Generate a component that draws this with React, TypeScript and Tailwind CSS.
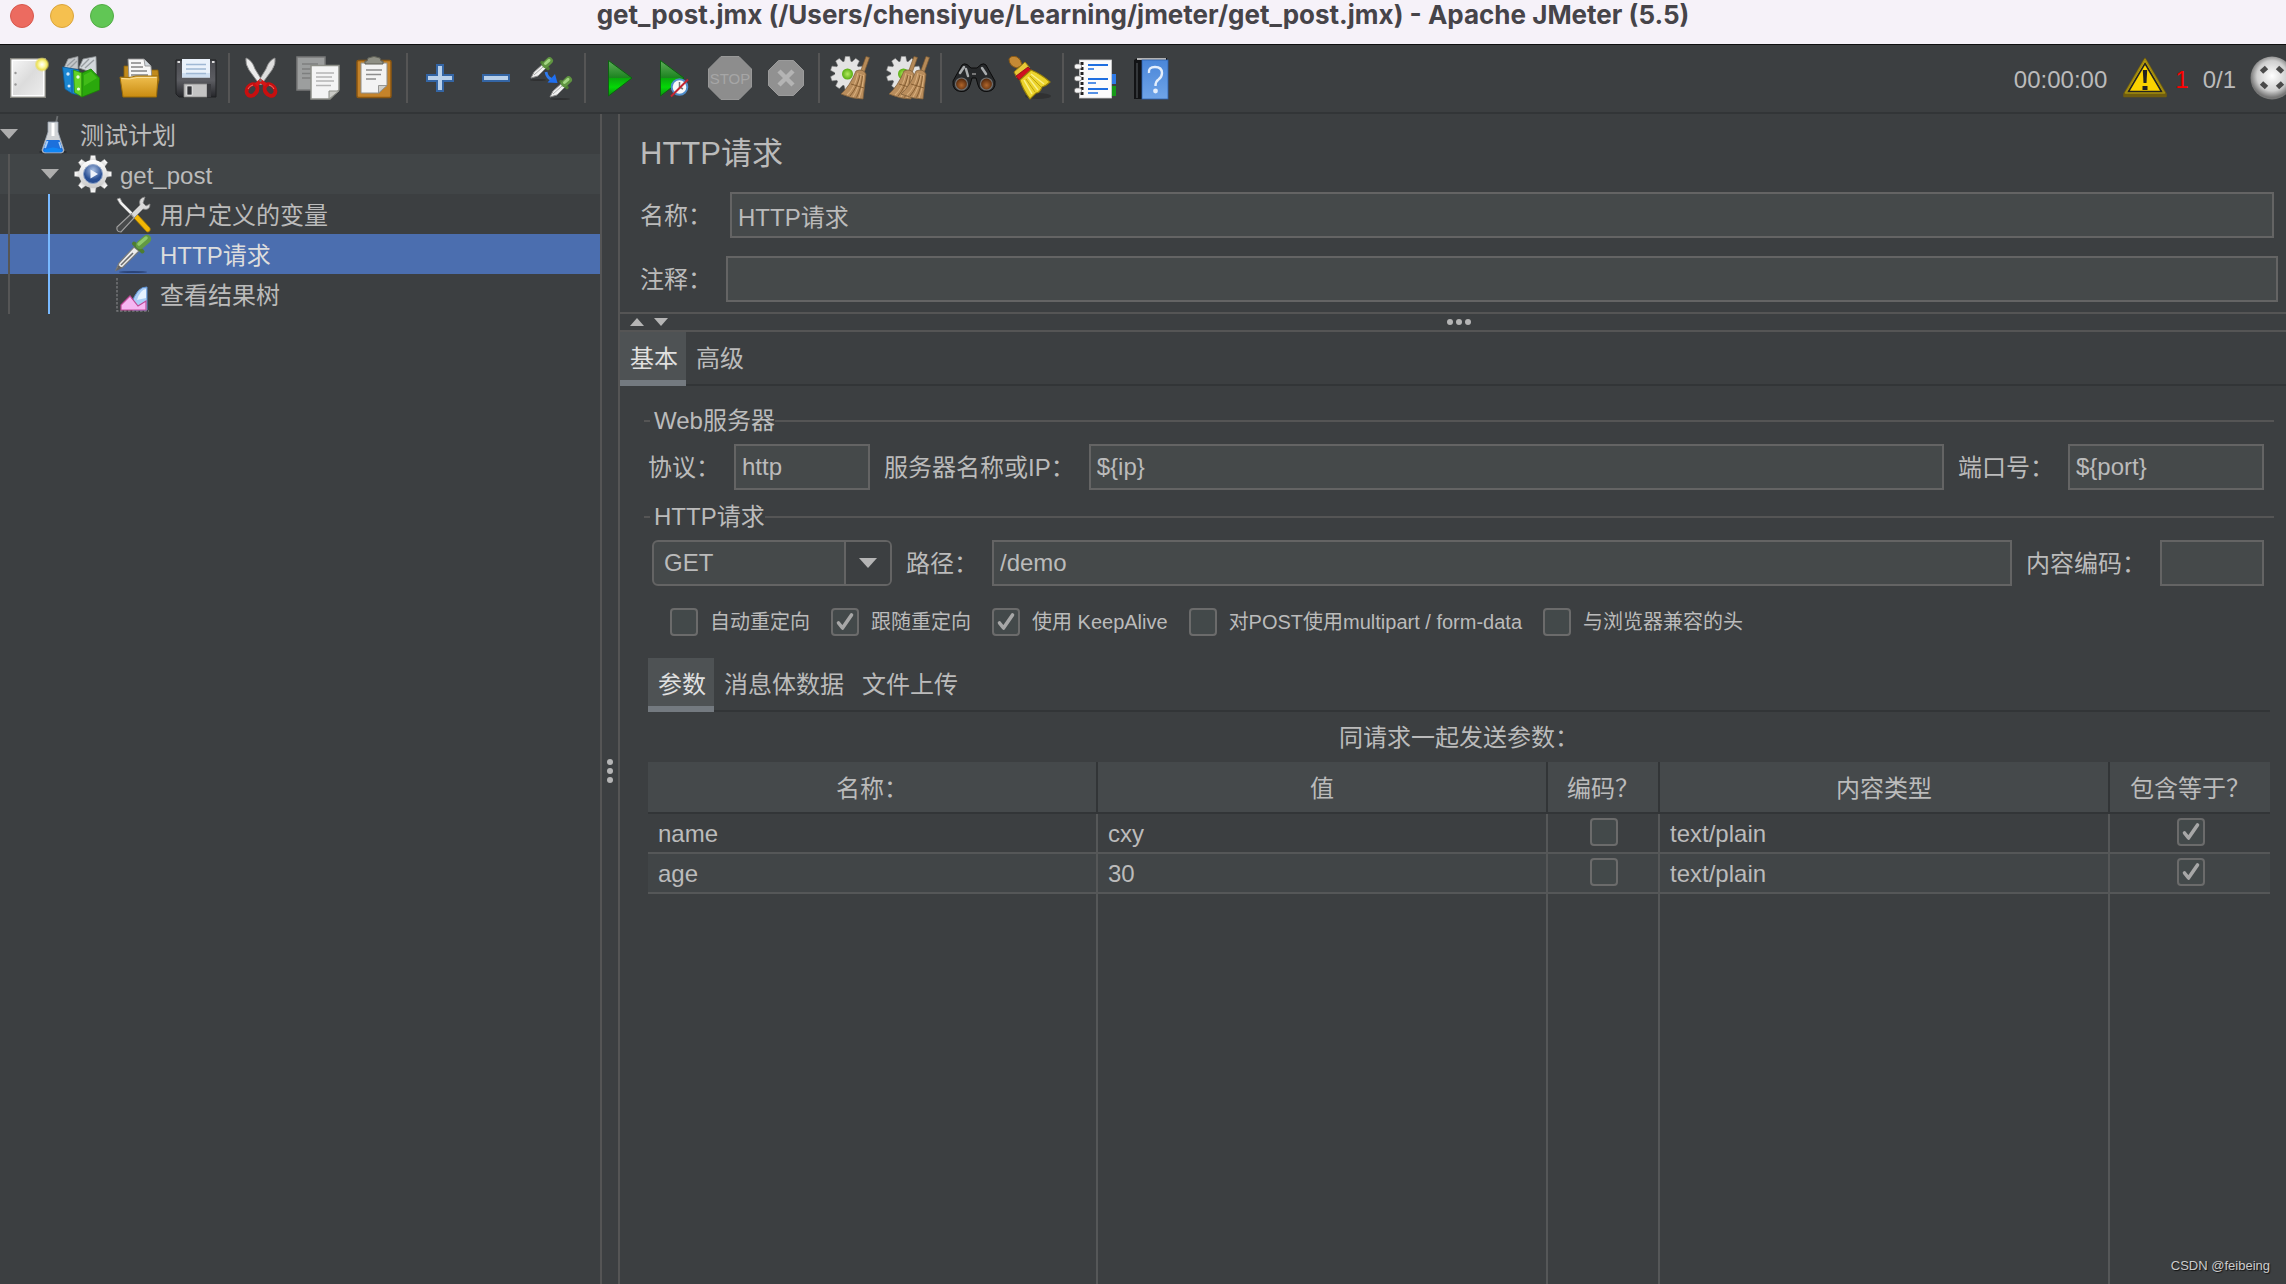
import React, { useState } from "react";

type IconProps = { children: React.ReactNode };

function Icon({ children }: IconProps) {
  return (
    <svg viewBox="0 0 44 44" className="block h-11 w-11 shrink-0" aria-hidden="true">
      {children}
    </svg>
  );
}

function Cog({ cx, cy, r, teeth = 8, fill }: { cx: number; cy: number; r: number; teeth?: number; fill: string }) {
  const list = Array.from({ length: teeth }, (_, i) => (360 / teeth) * i);
  return (
    <g fill={fill} stroke="#9a9a9a" strokeWidth="0.5">
      {list.map((a) => (
        <path
          key={a}
          d={`M${cx - 3.6} ${cy - r + 3} L${cx - 2.2} ${cy - r - 4.5} H${cx + 2.2} L${cx + 3.6} ${cy - r + 3} Z`}
          transform={`rotate(${a} ${cx} ${cy})`}
        />
      ))}
      <circle cx={cx} cy={cy} r={r} stroke="none" />
    </g>
  );
}

function Besom() {
  return (
    <g>
      <path d="M36 0.5 L39.5 1.5 L34 17 L30.5 15.5 Z" fill="#b58a58" stroke="#7d5a32" strokeWidth="0.7" />
      <path d="M26 15 Q33 12 36 18 L33 43 Q22 43 11 38 Q20 30 26 15 Z" fill="#b98d5c" stroke="#7f5f3b" strokeWidth="0.8" />
      <path d="M28 17 Q25 32 17 39 M31 18 Q29 32 23 41 M33.5 19 Q33 32 29 42" stroke="#d8ae7c" strokeWidth="1.1" fill="none" />
      <path d="M30 19 Q27 32 20 40 M32.5 20 Q31 33 26.500 41.500 M21 28 L34 32" stroke="#80592f" strokeWidth="0.9" fill="none" />
    </g>
  );
}

function Dropper() {
  return (
    <g>
      <path d="M1 20 L4 14 L13 6 L17 9 L8 18 Z" fill="#f1f1f1" stroke="#8b8b8b" strokeWidth="1" />
      <path d="M4 17 L13 9" stroke="#999" strokeWidth="0.8" />
      <path d="M12 4.500 L18 10.500" stroke="#4b7a30" strokeWidth="3.4" strokeLinecap="round" />
      <path d="M15.500 6.500 L19.500 2.800" stroke="#5f9440" strokeWidth="7" strokeLinecap="round" />
      <path d="M15.500 5.500 L19 2.300" stroke="#a3d582" strokeWidth="3" strokeLinecap="round" />
    </g>
  );
}

function Gradients() {
  return (
    <svg width="0" height="0" className="absolute" aria-hidden="true">
      <defs>
        <linearGradient id="play" x1="0" y1="0" x2="0" y2="1">
          <stop offset="0" stopColor="#5fae5a" />
          <stop offset="0.48" stopColor="#1d8420" />
          <stop offset="0.5" stopColor="#0aa80c" />
          <stop offset="0.75" stopColor="#04d806" />
          <stop offset="1" stopColor="#0c8d10" />
        </linearGradient>
        <linearGradient id="folder" x1="0" y1="0" x2="0" y2="1">
          <stop offset="0" stopColor="#f0c050" />
          <stop offset="1" stopColor="#c98b10" />
        </linearGradient>
        <linearGradient id="paper" x1="0" y1="0" x2="1" y2="1">
          <stop offset="0" stopColor="#f4f4f4" />
          <stop offset="0.5" stopColor="#dcdcdc" />
          <stop offset="1" stopColor="#ececec" />
        </linearGradient>
        <linearGradient id="metal" x1="0" y1="0" x2="0" y2="1">
          <stop offset="0" stopColor="#ffffff" />
          <stop offset="1" stopColor="#c9c9c9" />
        </linearGradient>
        <linearGradient id="floppy" x1="0" y1="0" x2="0" y2="1">
          <stop offset="0" stopColor="#4a4b50" />
          <stop offset="0.55" stopColor="#5c5d62" />
          <stop offset="1" stopColor="#25262a" />
        </linearGradient>
        <linearGradient id="book" x1="0" y1="0" x2="0" y2="1">
          <stop offset="0" stopColor="#4a86d8" />
          <stop offset="1" stopColor="#6fa4e8" />
        </linearGradient>
        <radialGradient id="sun">
          <stop offset="0" stopColor="#ffffff" />
          <stop offset="0.4" stopColor="#fbf7a8" />
          <stop offset="0.7" stopColor="#eee35a" />
          <stop offset="1" stopColor="#e8d840" stopOpacity="0" />
        </radialGradient>
        <radialGradient id="lime">
          <stop offset="0" stopColor="#b5ea60" />
          <stop offset="1" stopColor="#58ad12" />
        </radialGradient>
        <radialGradient id="lens" cx="0.5" cy="0.6">
          <stop offset="0" stopColor="#b0662c" />
          <stop offset="1" stopColor="#5a2c0e" />
        </radialGradient>
        <radialGradient id="ball" cx="0.5" cy="0.45">
          <stop offset="0" stopColor="#ffffff" />
          <stop offset="0.7" stopColor="#cfcfcf" />
          <stop offset="1" stopColor="#777777" />
        </radialGradient>
        <radialGradient id="blueball" cx="0.5" cy="0.3">
          <stop offset="0" stopColor="#a9bfe2" />
          <stop offset="1" stopColor="#294f93" />
        </radialGradient>
      </defs>
    </svg>
  );
}

const icons: Record<string, React.ReactNode> = {
  新建: (
    <>
      <rect x="4.700" y="2.700" width="34.600" height="38.600" fill="#fff" stroke="#85857f" strokeWidth="1.4" />
      <rect x="7" y="5" width="30" height="34" fill="url(#paper)" />
      <circle cx="9.500" cy="17" r="1.200" fill="#999" />
      <circle cx="9.500" cy="28.500" r="1.200" fill="#999" />
      <circle cx="36" cy="8.500" r="7.500" fill="url(#sun)" />
    </>
  ),
  模板: (
    <>
      <path d="M2 12 L6 3 L16 0.500 L16 13 Z" fill="#c4c7ca" stroke="#8b8f92" strokeWidth="0.8" />
      <path d="M17 12 L21 3 L34 0.500 L34.500 18 Z" fill="#d3d8dc" stroke="#8b8f92" strokeWidth="0.8" />
      <path d="M5 10 L13 3 M19 11 L27 3 M23 12 L32 4 M8 12 L15 5" stroke="#999ea2" strokeWidth="1.400" />
      <path d="M0.500 11 L4 11.500 L17 14 V39 L10 37.500 L3 33 Z" fill="#1a86d2" stroke="#0c5b98" strokeWidth="0.8" />
      <path d="M10 14 V37" stroke="#0d5fa0" strokeWidth="1" />
      <circle cx="6" cy="18" r="1.700" fill="#cfe8fa" />
      <circle cx="7" cy="30" r="1.500" fill="#cfe8fa" />
      <path d="M11.500 14 L20 17 V41 L12.500 36.500 Z" fill="#63d426" stroke="#2f8f0a" strokeWidth="0.8" />
      <path d="M20 17 L29 13 L37.500 22 V34 L20 41 Z" fill="#2aa80c" stroke="#1d7d08" strokeWidth="0.8" />
      <path d="M22 19 L29 15.500 L35 22 L22 30 Z" fill="#4cc41e" opacity="0.7" />
      <circle cx="16" cy="21" r="1.700" fill="#e6fadc" />
      <circle cx="16.500" cy="33" r="1.600" fill="#e6fadc" />
    </>
  ),
  打开: (
    <>
      <path d="M6 10 H13 V14 H40 L41 24 L38 36 H6 Z" fill="#c08a1c" stroke="#8a6008" strokeWidth="0.8" />
      <path d="M10 3 H26 L33 10 L34 24 H11 Z" fill="#f7f7f7" stroke="#8c8c8c" strokeWidth="0.9" />
      <path d="M26 3 L27 10 L33 10" fill="#cfd6dc" stroke="#8c8c8c" strokeWidth="0.8" />
      <path d="M13 7 H23 M13 11 H25 M13 15 H29 M13 19 H30" stroke="#858585" strokeWidth="1.500" />
      <path d="M2 21 Q12 22.500 18 20 H40 L38.500 41 H5 Z" fill="url(#folder)" stroke="#9c6c08" strokeWidth="1" />
      <path d="M3.500 22.500 Q12 24 19 21.500 H38.500" stroke="#fbe09a" strokeWidth="1" fill="none" />
    </>
  ),
  保存: (
    <>
      <path d="M2 4 H42 V41 H5 L2 38 Z" fill="url(#floppy)" stroke="#1f2023" strokeWidth="1" />
      <rect x="3.500" y="5" width="2.500" height="2" fill="#ddd" />
      <rect x="38" y="5" width="2.500" height="2" fill="#ddd" />
      <rect x="8" y="3" width="28" height="18.500" fill="#eaf2fb" />
      <rect x="8" y="17" width="28" height="4.500" fill="#cfdff1" />
      <path d="M12 8.500 H32 M12 13 H32 M12 17.500 H32" stroke="#9fb8d4" strokeWidth="1.600" />
      <path d="M10 28 H33 V41 H10 Z" fill="#c4c4c4" stroke="#888" strokeWidth="0.8" />
      <rect x="13" y="30" width="5" height="9" fill="#333438" stroke="#fff" strokeWidth="0.6" />
      <path d="M33 28 H37 V41 H33 Z" fill="#3a3b3f" />
    </>
  ),
  剪切: (
    <>
      <path d="M6 2 Q12 4 15 13 L23 26 L20 29 L9 14 Q5 8 6 2 Z" fill="#ececec" stroke="#8e8e8e" strokeWidth="0.9" />
      <path d="M35 2 Q29 4 26 13 L18 26 L21 29 L32 14 Q36 8 35 2 Z" fill="#dedede" stroke="#8e8e8e" strokeWidth="0.9" />
      <ellipse cx="12" cy="34" rx="4.800" ry="6.200" transform="rotate(38 12 34)" fill="none" stroke="#c80f0f" strokeWidth="4" />
      <ellipse cx="30" cy="34" rx="4.800" ry="6.200" transform="rotate(-38 30 34)" fill="none" stroke="#c80f0f" strokeWidth="4" />
      <path d="M16 29 L20.500 25 L26 29" stroke="#d41616" strokeWidth="4" fill="none" />
      <path d="M8 33 Q9 30 13 29 M34 33 Q33 30 29 29" stroke="#f26a6a" strokeWidth="1" fill="none" />
      <circle cx="20.500" cy="24.500" r="1.200" fill="#777" />
    </>
  ),
  复制: (
    <>
      <rect x="1" y="1" width="28" height="33" fill="#9c9e9e" stroke="#787a7a" strokeWidth="1.500" />
      <path d="M6 8 H22 M6 13 H22 M6 17.500 H18 M6 22 H20" stroke="#7d7f7f" strokeWidth="1.500" />
      <path d="M15 9.500 H43 V34 L34 43 H15 Z" fill="#f4f4f4" stroke="#8d8f88" strokeWidth="1.500" />
      <path d="M33 43 V35 H43 Z" fill="#c9cac6" stroke="#8d8f88" strokeWidth="1" />
      <path d="M20 17 H38 M20 21 H36 M20 25 H38 M20 29.500 H35" stroke="#b4b4b4" strokeWidth="1.500" />
    </>
  ),
  粘贴: (
    <>
      <rect x="5" y="4.500" width="34" height="37" rx="1.500" fill="#c4832a" stroke="#8c5710" strokeWidth="1.500" />
      <path d="M9 7 H35 V29 L27 37 H9 Z" fill="#f3f3f3" stroke="#8f8f8b" strokeWidth="1" />
      <path d="M26.500 37 V29.500 H35 Z" fill="#cfcfcb" stroke="#8f8f8b" strokeWidth="0.9" />
      <path d="M16 2 Q22 -1 28 2 L29 5 H31 V8 H13 V5 H15 Z" fill="#8f9085" stroke="#5e5f55" strokeWidth="1" />
      <path d="M14 14 H30 M14 18.500 H29 M14 23 H24" stroke="#8d8d8d" strokeWidth="1.600" />
    </>
  ),
  展开: <path d="M19 9 H25 V19 H35 V25 H25 V35 H19 V25 H9 V19 H19 Z" fill="#b9d0ea" stroke="#3465a4" strokeWidth="2" />,
  折叠: <rect x="9" y="19" width="26" height="6" fill="#b9d0ea" stroke="#3465a4" strokeWidth="2" />,
  切换: (
    <>
      <ellipse cx="8" cy="24" rx="8" ry="1" fill="#222" opacity="0.5" />
      <ellipse cx="30" cy="43" rx="10" ry="1" fill="#222" opacity="0.5" />
      <g transform="translate(0 2)">
        <Dropper />
      </g>
      <g transform="translate(19 21)">
        <Dropper />
      </g>
      <path d="M16 16 Q17 22 22 23.500" stroke="#2f7bf0" strokeWidth="2.800" fill="none" />
      <path d="M25 18 L27.500 27 L17.500 26.500 Z" fill="#1f6ff0" />
    </>
  ),
  启动: <path d="M12.500 4.500 L36 22 L12.500 40 Z" fill="url(#play)" stroke="#0c6510" strokeWidth="1" />,
  不停顿启动: (
    <>
      <path d="M8.500 4.500 L32 22 L8.500 40 Z" fill="url(#play)" stroke="#0c6510" strokeWidth="1" />
      <circle cx="27.500" cy="31" r="7.800" fill="#f8f8f8" stroke="#4f8cc9" strokeWidth="2" />
      <path d="M27.500 26 V31 L31 33" stroke="#777" strokeWidth="1.500" fill="none" />
      <path d="M19 40.500 L36 23.500" stroke="#c22632" strokeWidth="2" />
    </>
  ),
  停止: (
    <>
      <path d="M13 0.500 H31 L43.500 13 V31 L31 43.500 H13 L0.500 31 V13 Z" fill="#8d8d8d" stroke="#989898" strokeWidth="1" />
      <text x="22" y="28" textAnchor="middle" fontFamily="Liberation Sans" fontSize="15" fill="#a6a6a6">
        STOP
      </text>
    </>
  ),
  关闭: (
    <>
      <path d="M14.500 4.500 H29.500 L39.500 14.500 V29.500 L29.500 39.500 H14.500 L4.500 29.500 V14.500 Z" fill="#919191" stroke="#9b9b9b" strokeWidth="1" />
      <path d="M15 15 L29 29 M29 15 L15 29" stroke="#b4b4b4" strokeWidth="4.500" />
    </>
  ),
  清除: (
    <>
      <Cog cx={17.500} cy={17.500} r={12.500} teeth={10} fill="#e3e3e3" />
      <circle cx="17.500" cy="18" r="5.500" fill="url(#lime)" />
      <Besom />
    </>
  ),
  清除全部: (
    <>
      <Cog cx={17.500} cy={17.500} r={12.500} teeth={10} fill="#e3e3e3" />
      <circle cx="17.500" cy="18" r="5.500" fill="url(#lime)" />
      <g transform="translate(-8 0)">
        <Besom />
      </g>
      <g transform="translate(4 0)">
        <Besom />
      </g>
    </>
  ),
  搜索: (
    <>
      <path d="M10 9 Q12 7 15 8.500 L19 12 H25 L29 8.500 Q32 7 34 9 L43 25 Q44 35 35 35.500 Q28 36 26 29 L24 22 H20 L18 29 Q16 36 9 35.500 Q0 35 1 25 Z" fill="#26282a" stroke="#0b0b0b" strokeWidth="1" />
      <path d="M8 17 L12 11 M30 12 L34 18 M14 13 L16 20" stroke="#a9acae" strokeWidth="2.500" strokeLinecap="round" />
      <circle cx="9.500" cy="28" r="6" fill="url(#lens)" stroke="#6f6f6f" strokeWidth="1.200" />
      <circle cx="34.500" cy="28" r="6" fill="url(#lens)" stroke="#6f6f6f" strokeWidth="1.200" />
      <path d="M20 18 H24" stroke="#777" strokeWidth="2" />
    </>
  ),
  重置搜索: (
    <>
      <ellipse cx="30" cy="40" rx="13" ry="3" fill="#222" opacity="0.45" />
      <path d="M1 3 Q3 -1 9 1 Q13 3 14 9 L9 12 Q1 10 1 3 Z" fill="#c58a35" stroke="#8a5a15" strokeWidth="1" />
      <path d="M6 16 L17 6 L22 12 L9 22 Z" fill="#e8c838" stroke="#9a7c10" strokeWidth="1" />
      <path d="M8 20 L20 11 L23 14 L11 24 Z" fill="#cf1020" stroke="#8b0814" strokeWidth="0.8" />
      <path d="M12 24 L23 14 Q33 18 42 26 Q38 30 34 31 Q32 37 28 37 L22 43 Q15 34 12 24 Z" fill="#ecd42c" stroke="#9c8408" strokeWidth="1.100" />
      <path d="M16 24 L24 38 M20 21 L30 34 M23 18 L36 28" stroke="#fbf08a" strokeWidth="1.500" />
      <path d="M18 23 L27 36 M22 20 L33 31" stroke="#b79c10" strokeWidth="0.900" />
    </>
  ),
  函数助手: (
    <>
      <rect x="36" y="18" width="6" height="10" fill="#2f7be8" />
      <rect x="36" y="30" width="6" height="10" fill="#159a18" />
      <rect x="5.500" y="4" width="32" height="38" fill="#fbfbfb" stroke="#cfcfcf" strokeWidth="0.800" />
      <path d="M14 9 H34 M14 23 H34 M14 33 H34" stroke="#1f6fe0" strokeWidth="2.200" />
      <path d="M14 13 H20 M14 27 H22 M14 37 H24" stroke="#1f6fe0" strokeWidth="1.600" />
      <path d="M8 6 V41" stroke="#222" strokeWidth="3" strokeDasharray="3 2" />
      <g fill="#f5f5f5" stroke="#6f6f6f" strokeWidth="0.700">
        <rect x="0.500" y="8" width="7" height="5" rx="2" />
        <rect x="0.500" y="20" width="7" height="5" rx="2" />
        <rect x="0.500" y="32" width="7" height="5" rx="2" />
      </g>
    </>
  ),
  帮助: (
    <>
      <path d="M4 4 L8 2 H37 V4 H12 V43 H4 Z" fill="#121315" />
      <path d="M7 3 H36" stroke="#dcdcdc" strokeWidth="1.600" />
      <path d="M7 7 V42" stroke="#34373a" strokeWidth="2" />
      <rect x="12" y="4" width="26" height="39" fill="url(#book)" stroke="#2d61ae" strokeWidth="0.800" />
      <path d="M19 17 Q18 11 25 11 Q32 11 32 17 Q32 21 28.500 23.500 Q25.500 25.500 25.500 30" fill="none" stroke="#e4eefb" strokeWidth="2.400" />
      <circle cx="25.500" cy="35" r="2.400" fill="#e4eefb" />
    </>
  ),
};

const toolGroups = [
  ["新建", "模板", "打开", "保存"],
  ["剪切", "复制", "粘贴"],
  ["展开", "折叠", "切换"],
  ["启动", "不停顿启动", "停止", "关闭"],
  ["清除", "清除全部"],
  ["搜索", "重置搜索"],
  ["函数助手", "帮助"],
];

function Toolbar() {
  return (
    <div role="toolbar" className="flex items-center gap-2.5 overflow-hidden border-b-2 border-[#323537] pt-2 pb-[9px] pl-1.5">
      {toolGroups.map((group, i) => (
        <React.Fragment key={group[0]}>
          {i > 0 && <span className="h-[50px] w-0.5 shrink-0 bg-[#555555]" />}
          <div className="flex gap-3">
            {group.map((name) => (
              <button key={name} type="button" aria-label={name}>
                <Icon>{icons[name]}</Icon>
              </button>
            ))}
          </div>
        </React.Fragment>
      ))}
      <div className="-mr-2 ml-auto flex items-center">
        <span className="pt-1">00:00:00</span>
        <button type="button" aria-label="警告" className="mr-2 ml-4">
          <Icon>
            <path d="M22 2.500 L43 38 V40.500 H1 V38 Z" fill="#6f5c0e" stroke="#6f5c0e" strokeWidth="1.500" strokeLinejoin="round" />
            <path d="M22 3.500 L41.500 37 H2.500 Z" fill="#e8c400" stroke="#a08a10" strokeWidth="1.500" strokeLinejoin="round" />
            <path d="M22 7.500 L38.500 35.500 H5.500 Z" fill="#fbd300" stroke="#222" strokeWidth="1.600" />
            <path d="M19.800 14 H24.200 L23.500 27 H20.500 Z" fill="#222" />
            <rect x="19.500" y="30" width="5" height="4" fill="#222" />
          </Icon>
        </button>
        <span className="pt-1 text-[#ff0000]">1</span>
        <span className="mx-3.5 pt-1">0/1</span>
        <Icon>
          <circle cx="22" cy="22" r="21.500" fill="url(#ball)" />
          <g stroke="#4a4a4a" strokeWidth="5">
            <path d="M11.500 16 L16.500 11.500" />
            <path d="M27.500 11.500 L32.500 16" />
            <path d="M11.500 27 L16.500 31.500" />
            <path d="M27.500 31.500 L32.500 27" />
          </g>
        </Icon>
      </div>
    </div>
  );
}

function TreeArrow() {
  return (
    <svg viewBox="0 0 18 10" className="h-2.5 w-[18px] shrink-0" aria-hidden="true">
      <path d="M0 0 H18 L9 10 Z" fill="#adadad" />
    </svg>
  );
}

function TreeIcon({ children }: IconProps) {
  return (
    <svg viewBox="0 0 40 40" className="block h-10 w-10 shrink-0" aria-hidden="true">
      {children}
    </svg>
  );
}

const flask = (
  <>
    <ellipse cx="20" cy="38" rx="14" ry="1.800" fill="#1f2224" opacity="0.6" />
    <path d="M23 9 L24.500 2" stroke="#6b6e70" strokeWidth="1.800" />
    <path d="M15 8 H25 V18 L31 36 Q31 39 28 39 H12 Q9 39 9 36 L15 18 Z" fill="#d0d3d6" stroke="#9aa5b3" strokeWidth="0.800" />
    <path d="M20 9 V22" stroke="#fff" strokeWidth="3" />
    <path d="M13.500 26 H26.500 L30 36 Q30 38.500 27 38.500 H13 Q10 38.500 10 36 Z" fill="#1c70dc" />
    <path d="M11 36 Q20 31 29 36 L28 38 H12 Z" fill="#0f86f5" />
    <path d="M12 34 L14.500 27" stroke="#a7cdf8" strokeWidth="2" />
    <path d="M28 34 L26 28" stroke="#a7cdf8" strokeWidth="1.500" />
  </>
);

const gear = (
  <>
    <Cog cx={20} cy={20} r={14} fill="url(#metal)" />
    <circle cx="20" cy="20" r="9.500" fill="url(#blueball)" stroke="#8ea3c8" strokeWidth="1" />
    <path d="M17.500 15.500 L25 20 L17.500 24.500 Z" fill="#eef3fb" />
  </>
);

const tools = (
  <>
    <path d="M4 5 L7 4 L9 8 L21 20 L19 22 L7 10 Z" fill="#f0f0f0" stroke="#8a8a8a" strokeWidth="0.700" />
    <path d="M20 19 L24 20 L37 34 Q38 38 34 38 L21 24 Z" fill="#f2b705" stroke="#a87c02" strokeWidth="0.800" />
    <path d="M32 3 Q25 4 27 11 L17 21 L21 24 L30 15 Q37 17 37 10 L33 12 L30 9 Z" fill="#d9d9d9" stroke="#8a8a8a" strokeWidth="0.800" />
    <path d="M18 20 L4 33 Q3 38 8 38 L21 24 Z" fill="#484a4b" stroke="#a0a0a0" strokeWidth="1.200" />
  </>
);

const sampler = (
  <>
    <ellipse cx="20" cy="38" rx="14" ry="1" fill="#2b4478" />
    <path d="M3 36 L6 29 L21 13 L26 17 L10 33 Z" fill="#ececec" stroke="#77797b" strokeWidth="1.200" />
    <path d="M3 37 L5.500 31 L9 34 Z" fill="#666" />
    <path d="M8 31 L20 19" stroke="#6a6c6e" strokeWidth="1.600" />
    <path d="M21 9.500 L29.500 17.500" stroke="#4d7d31" strokeWidth="4" strokeLinecap="round" />
    <path d="M27 11 L34 5" stroke="#629a42" strokeWidth="8.500" strokeLinecap="round" />
    <path d="M26 10 L33 4" stroke="#8fc96c" strokeWidth="3.500" strokeLinecap="round" />
  </>
);

const chart = (
  <>
    <path d="M4 4 V37 H36" fill="none" stroke="#77797b" strokeWidth="1.400" strokeDasharray="2.500 1.500" />
    <path d="M18 31 Q24 12 34 13 V36 H20 Z" fill="#a9cdf6" stroke="#5c8fd0" strokeWidth="1" />
    <path d="M24 26 Q27 16 33 15 V24 Z" fill="#e6f2ff" />
    <path d="M8 36 V31 L17 22 L25 32 L33 27 V36 Z" fill="#f6b6f2" stroke="#c04a98" strokeWidth="1.200" />
  </>
);

function Field({ id, value, className }: { id: string; value: string; className: string }) {
  return (
    <input
      id={id}
      type="text"
      defaultValue={value}
      className={`h-[46px] min-w-0 border-2 border-[#646464] bg-[#45494a] px-1.5 outline-none ${className}`}
    />
  );
}

function Check({ id, checked, label }: { id: string; checked?: boolean; label?: string }) {
  return (
    <span className="inline-grid h-7 w-7 shrink-0">
      <input
        id={id}
        type="checkbox"
        aria-label={label}
        defaultChecked={checked}
        className="peer col-start-1 row-start-1 h-7 w-7 appearance-none rounded border-2 border-[#6b6b6b] bg-[#43494a]"
      />
      <svg
        viewBox="0 0 28 28"
        className="pointer-events-none invisible col-start-1 row-start-1 h-7 w-7 peer-checked:visible"
        aria-hidden="true"
      >
        <path d="M7.500 15 L11.500 20 L20.500 7" fill="none" stroke="#a7a7a7" strokeWidth="3.600" strokeLinecap="round" strokeLinejoin="round" />
      </svg>
    </span>
  );
}

function Tabs({ names }: { names: string[] }) {
  const [active, setActive] = useState(0);
  return (
    <div role="tablist" className="flex shadow-[inset_0_-2px_0_#323537]">
      {names.map((name, i) => (
        <button
          key={name}
          type="button"
          role="tab"
          aria-selected={i === active}
          onClick={() => setActive(i)}
          className={
            i === active
              ? "h-[54px] border-b-6 border-[#747a80] bg-[#4e5254] pt-1.5 pr-2 pl-2.5 text-[#e0e0e0]"
              : "h-[54px] border-b-6 border-transparent pt-1.5 pr-2 pl-2.5"
          }
        >
          {name}
        </button>
      ))}
    </div>
  );
}

const options = [
  { id: "auto", label: "自动重定向", checked: false },
  { id: "follow", label: "跟随重定向", checked: true },
  { id: "keep", label: "使用 KeepAlive", checked: true },
  { id: "multipart", label: "对POST使用multipart / form-data", checked: false },
  { id: "compat", label: "与浏览器兼容的头", checked: false },
];

const params = [
  { name: "name", value: "cxy", type: "text/plain" },
  { name: "age", value: "30", type: "text/plain" },
];

function ParamTable() {
  const th = "border-r-2 border-b-2 border-[#323537] px-0 pt-1 pb-0 font-normal last:border-r-0";
  const td = "border-r-2 border-b-2 border-[#555758] px-2.5 pt-0.5 pb-0 last:border-r-0";
  const tdCheck = "border-r-2 border-b-2 border-[#555758] p-0 pl-0.5 last:border-r-0";
  const blank = "border-r-2 border-[#555758] p-0 last:border-r-0";
  return (
    <div className="flex flex-1">
      <table className="w-full table-fixed border-separate border-spacing-0">
        <colgroup>
          <col />
          <col />
          <col className="w-28" />
          <col />
          <col className="w-40" />
        </colgroup>
        <thead>
          <tr className="h-[52px] bg-[#45494b]">
            {["名称：", "值", "编码？", "内容类型", "包含等于？"].map((h) => (
              <th key={h} scope="col" className={th}>
                {h}
              </th>
            ))}
          </tr>
        </thead>
        <tbody>
          {params.map((p) => (
            <tr key={p.name} className="h-10 even:bg-[#414547]">
              <td className={td}>{p.name}</td>
              <td className={td}>{p.value}</td>
              <td className={tdCheck}>
                <span className="flex justify-center pb-0.5">
                  <Check id={`encode-${p.name}`} label={`编码 ${p.name}`} />
                </span>
              </td>
              <td className={td}>{p.type}</td>
              <td className={tdCheck}>
                <span className="flex justify-center pb-0.5">
                  <Check id={`equals-${p.name}`} label={`包含等于 ${p.name}`} checked />
                </span>
              </td>
            </tr>
          ))}
          <tr>
            <td className={blank} />
            <td className={blank} />
            <td className={blank} />
            <td className={blank} />
            <td className={blank} />
          </tr>
        </tbody>
      </table>
    </div>
  );
}

function Tree() {
  const leaves = [
    { label: "用户定义的变量", icon: tools },
    { label: "HTTP请求", icon: sampler, selected: true },
    { label: "查看结果树", icon: chart },
  ];
  return (
    <ul role="tree" className="w-[600px] shrink-0">
      <li role="treeitem" aria-expanded="true">
        <div className="flex h-10 items-center">
          <TreeArrow />
          <span className="ml-[15px]">
            <TreeIcon>{flask}</TreeIcon>
          </span>
          <span className="ml-[7px] pt-1">测试计划</span>
        </div>
        <ul role="group">
          <li role="treeitem" aria-expanded="true">
            <div className="flex h-10 items-center bg-[#414547]">
              <span className="ml-2 h-10 w-0.5 bg-[#565656]" />
              <span className="ml-[31px] flex">
                <TreeArrow />
              </span>
              <span className="ml-3.5">
                <TreeIcon>{gear}</TreeIcon>
              </span>
              <span className="ml-[7px] pt-1">get_post</span>
            </div>
            <ul role="group">
              {leaves.map((leaf) => (
                <li
                  key={leaf.label}
                  role="treeitem"
                  aria-selected={!!leaf.selected}
                  className={leaf.selected ? "flex h-10 items-center bg-[#4b6eaf] text-[#dddddd]" : "flex h-10 items-center"}
                >
                  <span className="ml-2 h-10 w-0.5 bg-[#565656]" />
                  <span className="ml-[38px] h-10 w-0.5 bg-[#78b9ff]" />
                  <span className="ml-[63px]">
                    <TreeIcon>{leaf.icon}</TreeIcon>
                  </span>
                  <span className="ml-[7px] pt-1">{leaf.label}</span>
                </li>
              ))}
            </ul>
          </li>
        </ul>
      </li>
    </ul>
  );
}

function Dot() {
  return <span className="h-1.5 w-1.5 rounded-full bg-[#b5b5b5]" />;
}

export default function App() {
  return (
    <div className="relative flex min-h-screen flex-col bg-[#3c3f41] font-['Liberation_Sans','Noto_Sans_CJK_SC',sans-serif] text-2xl leading-8 text-[#bbbbbb]">
      <Gradients />
      <header className="flex h-[45px] items-start border-b border-[#101010] bg-[#f6f2f9] px-2.5">
        <div className="flex flex-1 gap-4 pt-1">
          <button type="button" aria-label="关闭窗口" className="h-6 w-6 rounded-full border border-[#d8584d] bg-[#ec6b60]" />
          <button type="button" aria-label="最小化" className="h-6 w-6 rounded-full border border-[#dba53c] bg-[#f5c04f]" />
          <button type="button" aria-label="缩放" className="h-6 w-6 rounded-full border border-[#52ac45] bg-[#61c655]" />
        </div>
        <h1 className="font-['Inter',sans-serif] text-[26px] leading-[30px] font-bold text-[#464449]">
          get_post.jmx (/Users/chensiyue/Learning/jmeter/get_post.jmx) - Apache JMeter (5.5)
        </h1>
        <div className="flex-1" />
      </header>

      <Toolbar />

      <div className="flex flex-1">
        <Tree />
        <div className="flex w-5 shrink-0 flex-col items-center justify-center gap-[3px] border-x-2 border-[#555555] pt-36">
          <Dot />
          <Dot />
          <Dot />
        </div>

        <main className="flex min-w-0 flex-1 flex-col">
          <h2 className="pt-5 pl-5 text-[31px] leading-10">HTTP请求</h2>
          <div className="mt-[18px] flex items-center pr-3 pl-5">
            <label htmlFor="name" className="mr-[18px] pt-0.5">
              名称：
            </label>
            <Field id="name" value="HTTP请求" className="flex-1" />
          </div>
          <div className="mt-[18px] mb-2.5 flex items-center pr-2 pl-5">
            <label htmlFor="comment" className="mr-3.5 pt-0.5">
              注释：
            </label>
            <Field id="comment" value="" className="flex-1" />
          </div>

          <div className="grid h-5 grid-cols-[1fr_auto_1fr] items-center border-y-2 border-[#555555]">
            <div className="flex gap-2.5 pl-2.5">
              <button type="button" aria-label="收起">
                <svg viewBox="0 0 14 8" className="h-2 w-3.5" aria-hidden="true">
                  <path d="M0 8 H14 L7 0 Z" fill="#b5b5b5" />
                </svg>
              </button>
              <button type="button" aria-label="展开面板">
                <svg viewBox="0 0 14 8" className="h-2 w-3.5" aria-hidden="true">
                  <path d="M0 0 H14 L7 8 Z" fill="#b5b5b5" />
                </svg>
              </button>
            </div>
            <div className="flex gap-[3px] pl-3">
              <Dot />
              <Dot />
              <Dot />
            </div>
            <div />
          </div>

          <Tabs names={["基本", "高级"]} />

          <div className="mt-[19px] pr-3 pl-6">
            <fieldset className="min-w-0 border-t-2 border-[#555555] pt-[7px] pr-2.5 pl-1">
              <legend className="ml-0.5 pl-1">Web服务器</legend>
              <div className="flex items-center gap-3.5">
                <label htmlFor="protocol" className="pt-0.5">
                  协议：
                </label>
                <Field id="protocol" value="http" className="w-[136px]" />
                <label htmlFor="server" className="pt-0.5">
                  服务器名称或IP：
                </label>
                <Field id="server" value="${ip}" className="flex-1" />
                <label htmlFor="port" className="pt-0.5">
                  端口号：
                </label>
                <Field id="port" value="${port}" className="w-[196px]" />
              </div>
            </fieldset>

            <fieldset className="mt-[11px] min-w-0 border-t-2 border-[#555555] pt-[7px] pr-2.5 pl-1">
              <legend className="ml-0.5 pl-1">HTTP请求</legend>
              <div className="ml-1 flex items-center gap-3.5">
                <div className="grid h-[46px] w-60 grid-cols-[1fr_46px] overflow-hidden rounded-md border-2 border-[#646464] bg-[#45494a]">
                  <select
                    aria-label="方法"
                    defaultValue="GET"
                    className="col-span-2 col-start-1 row-start-1 appearance-none pl-2.5 outline-none"
                  >
                    <option>GET</option>
                    <option>POST</option>
                    <option>PUT</option>
                  </select>
                  <span className="pointer-events-none col-start-2 row-start-1 flex items-center justify-center border-l-2 border-[#646464] bg-[#3c3f41]">
                    <svg viewBox="0 0 18 10" className="h-2.5 w-[18px]" aria-hidden="true">
                      <path d="M0 0 H18 L9 10 Z" fill="#b5b5b5" />
                    </svg>
                  </span>
                </div>
                <label htmlFor="path" className="pt-0.5">
                  路径：
                </label>
                <Field id="path" value="/demo" className="flex-1" />
                <label htmlFor="charset" className="pt-0.5">
                  内容编码：
                </label>
                <Field id="charset" value="" className="w-[104px]" />
              </div>
              <div className="mt-[22px] ml-[22px] flex gap-[21px] text-xl leading-7">
                {options.map((o) => (
                  <span key={o.id} className="flex items-center gap-3">
                    <Check id={o.id} checked={o.checked} />
                    <label htmlFor={o.id}>{o.label}</label>
                  </span>
                ))}
              </div>
            </fieldset>
          </div>

          <div className="mt-[22px] flex flex-1 flex-col pr-4 pl-7">
            <Tabs names={["参数", "消息体数据", "文件上传"]} />
            <p className="pt-2.5 pb-2 text-center">同请求一起发送参数：</p>
            <ParamTable />
          </div>
        </main>
      </div>

      <p className="absolute right-4 bottom-2 text-[13px] leading-5 text-[#cccccc] [text-shadow:1px_1px_1px_#111]">
        CSDN @feibeing
      </p>
    </div>
  );
}
